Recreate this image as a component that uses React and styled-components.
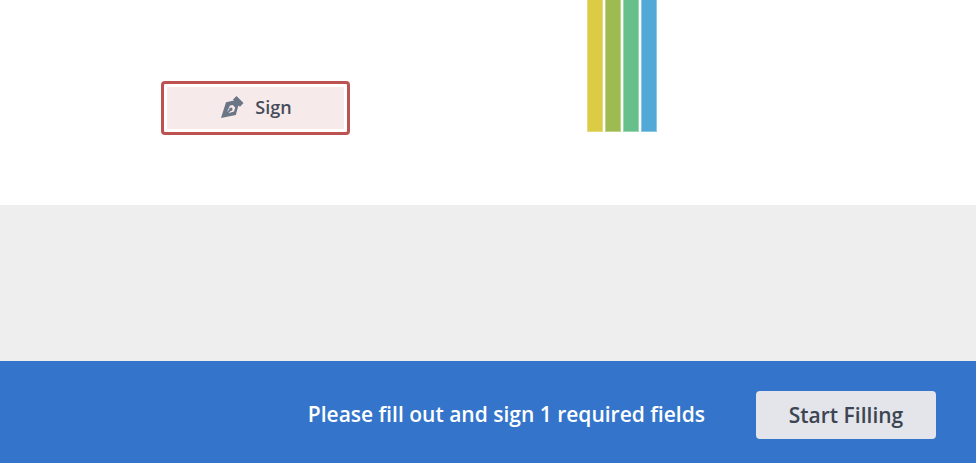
import React from "react";
import styled, { createGlobalStyle } from "styled-components";

const Global = createGlobalStyle`
  html, body {
    margin: 0;
    padding: 0;
    overflow: hidden;
    background: #fff;
    font-family: "Open Sans", "Noto Sans", sans-serif;
  }
  * { box-sizing: border-box; }
`;

const Page = styled.div`
  width: 976px;
  height: 463px;
  display: flex;
  flex-direction: column;
`;

const Sheet = styled.div`
  height: 205px;
  background: #fff;
  display: flex;
  align-items: flex-start;
  padding-left: 161px;
`;

const SignField = styled.button`
  width: 189px;
  height: 54px;
  margin-top: 81px;
  border: 3px solid #bd5350;
  border-radius: 4px;
  background: #f7eaea;
  box-shadow: inset 0 0 0 3px #fff;
  display: flex;
  align-items: center;
  justify-content: center;
  gap: 11px;
  padding: 0 0 2px 1px;
  font-family: inherit;
  font-size: 18px;
  font-weight: 600;
  color: #444c5a;
`;

const Bars = styled.div`
  margin-left: 237px;
  display: flex;
  gap: 2px;
`;

const Bar = styled.div`
  width: 16px;
  height: 132px;
  background: ${(p) => p.$color};
  border: solid ${(p) => p.$edge};
  border-width: 0 1px 1px;
`;

const Gap = styled.div`
  height: 156px;
  background: #eeeeee;
`;

const Footer = styled.div`
  height: 102px;
  background: #3475cb;
  display: flex;
  align-items: center;
  justify-content: flex-end;
  padding-right: 40px;
  gap: 51px;
`;

const Message = styled.span`
  margin-top: 4px;
  font-size: 21px;
  font-weight: 600;
  color: #fff;
`;

const StartButton = styled.button`
  width: 180px;
  height: 48px;
  margin-top: 6px;
  border: 0;
  border-radius: 4px;
  background: #e3e5ea;
  color: #3d4452;
  font-family: inherit;
  font-size: 21px;
  font-weight: 600;
  padding: 0 0 1px;
`;

const PenIcon = () => (
  <svg width="24" height="24" viewBox="0 0 24 24" aria-hidden="true">
    <path
      fill="#6a7686"
      fillRule="evenodd"
      d="M16.5 1 L23.5 8 L20 11.8 L18.4 10.6 L15.8 20 L1 23 L6 7.3 L14 5.6 L13 4.4 Z M10 10.5 L7 17 L9.2 14.8 A1.7 1.7 0 1 1 10.6 16 L8.4 18.2 L14 16.5 L15.2 12.4 L12.8 10 Z"
    />
  </svg>
);

const bars = [
  { color: "#dccb45", edge: "#e6da7d" },
  { color: "#9dbb50", edge: "#bfd288" },
  { color: "#67c08b", edge: "#9bd6b2" },
  { color: "#52a9d8", edge: "#8cc6e5" },
];

export default function App() {
  return (
    <Page>
      <Global />
      <Sheet>
        <SignField>
          <PenIcon />
          Sign
        </SignField>
        <Bars>
          {bars.map((b) => (
            <Bar key={b.color} $color={b.color} $edge={b.edge} />
          ))}
        </Bars>
      </Sheet>
      <Gap />
      <Footer>
        <Message>Please fill out and sign 1 required fields</Message>
        <StartButton>Start Filling</StartButton>
      </Footer>
    </Page>
  );
}
